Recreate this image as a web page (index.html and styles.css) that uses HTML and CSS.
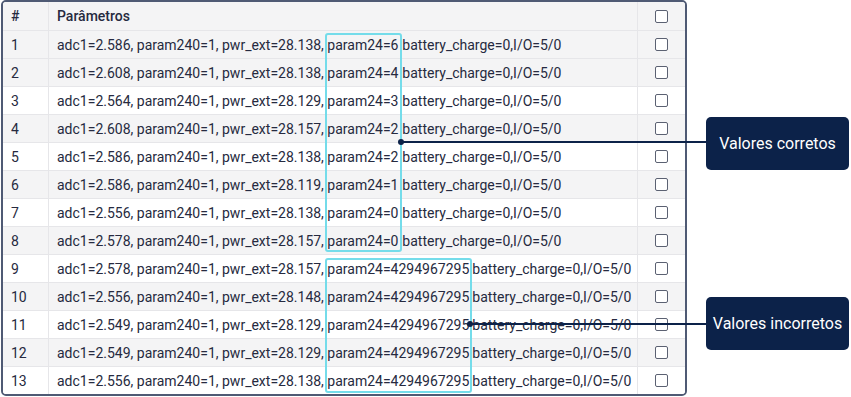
FILE: index.html
```html
<!DOCTYPE html>
<html lang="pt">
<head>
<meta charset="utf-8">
<link rel="stylesheet" href="styles.css">
</head>
<body>
<div class="page">
  <div class="frame">
    <div class="row head">
      <div class="c-num">#</div>
      <div class="c-par">Parâmetros</div>
      <div class="c-chk"><span class="box"></span></div>
    </div>
    <div class="row alt"><div class="c-num">1</div><div class="c-par">adc1=2.586, param240=1, pwr_ext=28.138, <span class="p24 a">param24=6</span>battery_charge=0,I/O=5/0</div><div class="c-chk"><span class="box"></span></div></div>
    <div class="row alt"><div class="c-num">2</div><div class="c-par">adc1=2.608, param240=1, pwr_ext=28.138, <span class="p24 a">param24=4</span>battery_charge=0,I/O=5/0</div><div class="c-chk"><span class="box"></span></div></div>
    <div class="row"><div class="c-num">3</div><div class="c-par">adc1=2.564, param240=1, pwr_ext=28.129, <span class="p24 a">param24=3</span>battery_charge=0,I/O=5/0</div><div class="c-chk"><span class="box"></span></div></div>
    <div class="row alt"><div class="c-num">4</div><div class="c-par">adc1=2.608, param240=1, pwr_ext=28.157, <span class="p24 a">param24=2</span>battery_charge=0,I/O=5/0</div><div class="c-chk"><span class="box"></span></div></div>
    <div class="row"><div class="c-num">5</div><div class="c-par">adc1=2.586, param240=1, pwr_ext=28.138, <span class="p24 a">param24=2</span>battery_charge=0,I/O=5/0</div><div class="c-chk"><span class="box"></span></div></div>
    <div class="row alt"><div class="c-num">6</div><div class="c-par">adc1=2.586, param240=1, pwr_ext=28.119, <span class="p24 a">param24=1</span>battery_charge=0,I/O=5/0</div><div class="c-chk"><span class="box"></span></div></div>
    <div class="row"><div class="c-num">7</div><div class="c-par">adc1=2.556, param240=1, pwr_ext=28.138, <span class="p24 a">param24=0</span>battery_charge=0,I/O=5/0</div><div class="c-chk"><span class="box"></span></div></div>
    <div class="row alt"><div class="c-num">8</div><div class="c-par">adc1=2.578, param240=1, pwr_ext=28.157, <span class="p24 a">param24=0</span>battery_charge=0,I/O=5/0</div><div class="c-chk"><span class="box"></span></div></div>
    <div class="row"><div class="c-num">9</div><div class="c-par">adc1=2.578, param240=1, pwr_ext=28.157, <span class="p24 b">param24=4294967295</span>battery_charge=0,I/O=5/0</div><div class="c-chk"><span class="box"></span></div></div>
    <div class="row alt"><div class="c-num">10</div><div class="c-par">adc1=2.556, param240=1, pwr_ext=28.148, <span class="p24 b">param24=4294967295</span>battery_charge=0,I/O=5/0</div><div class="c-chk"><span class="box"></span></div></div>
    <div class="row"><div class="c-num">11</div><div class="c-par">adc1=2.549, param240=1, pwr_ext=28.129, <span class="p24 b">param24=4294967295</span>battery_charge=0,I/O=5/0</div><div class="c-chk"><span class="box"></span></div></div>
    <div class="row alt"><div class="c-num">12</div><div class="c-par">adc1=2.549, param240=1, pwr_ext=28.129, <span class="p24 b">param24=4294967295</span>battery_charge=0,I/O=5/0</div><div class="c-chk"><span class="box"></span></div></div>
    <div class="row"><div class="c-num">13</div><div class="c-par">adc1=2.556, param240=1, pwr_ext=28.138, <span class="p24 b">param24=4294967295</span>battery_charge=0,I/O=5/0</div><div class="c-chk"><span class="box"></span></div></div>

    <div class="hl hl-a"></div>
    <div class="hl hl-b"></div>
  </div>
  <div class="notes">
    <div class="note note-a">Valores corretos</div>
    <div class="note note-b">Valores incorretos</div>
  </div>
  <div class="lead lead-a"><span class="dot"></span></div>
  <div class="lead lead-b"><span class="dot"></span></div>
</div>
</body>
</html>
```

FILE: styles.css
```css
* { box-sizing: border-box; }
html, body { margin: 0; padding: 0; background: #fff; }
body { font-family: Roboto, "Noto Sans", "Liberation Sans", sans-serif; color: #262a40; }
.page { position: relative; display: flex; align-items: flex-start; width: 851px; height: 397px; padding: 0 0 0 1px; }
.frame { position: relative; width: 686px; border: 2px solid #4f5a74; border-radius: 5px; overflow: hidden; }
.row { display: flex; height: 28px; border-top: 1px solid #e6e6e9; background: #fff; font-size: 14px; }
.row.head { height: 28px; border-top: 0; background: #f4f4f5; font-weight: 500; }
.row.alt { background: #f4f4f5; }
.c-num { width: 46px; padding-left: 8px; display: flex; align-items: center; border-right: 1px solid #e6e6e9; }
.c-par { width: 589px; padding-left: 8px; display: flex; align-items: center; white-space: pre; border-right: 1px solid #e6e6e9; }
.c-chk { flex: 1; display: flex; align-items: center; justify-content: center; }
.box { width: 13px; height: 13px; border: 1px solid #5b6172; border-radius: 2px; background: #fff; }
.p24 { display: inline-block; }
.p24.a { width: 75px; }
.p24.b { width: 145px; }
.hl { position: absolute; border: 2px solid #74dcea; border-radius: 3px; }
.hl-a { left: 322px; top: 31px; width: 77px; height: 219px; }
.hl-b { left: 322px; top: 256px; width: 147px; height: 135px; }
.notes { display: flex; flex-direction: column; margin-left: 19px; }
.note { width: 143px; height: 53px; background: #0c2249; color: #fff; border-radius: 5px; font-size: 16px; display: flex; align-items: center; justify-content: center; }
.note-a { margin-top: 117px; }
.note-b { margin-top: 127px; }
.lead { position: absolute; height: 2px; background: #0c2249; }
.lead-a { left: 400px; top: 141px; width: 306px; }
.lead-b { left: 469px; top: 323px; width: 237px; }
.dot { position: absolute; left: -2px; top: -2px; width: 6px; height: 6px; border-radius: 50%; background: #0c2249; }
```
